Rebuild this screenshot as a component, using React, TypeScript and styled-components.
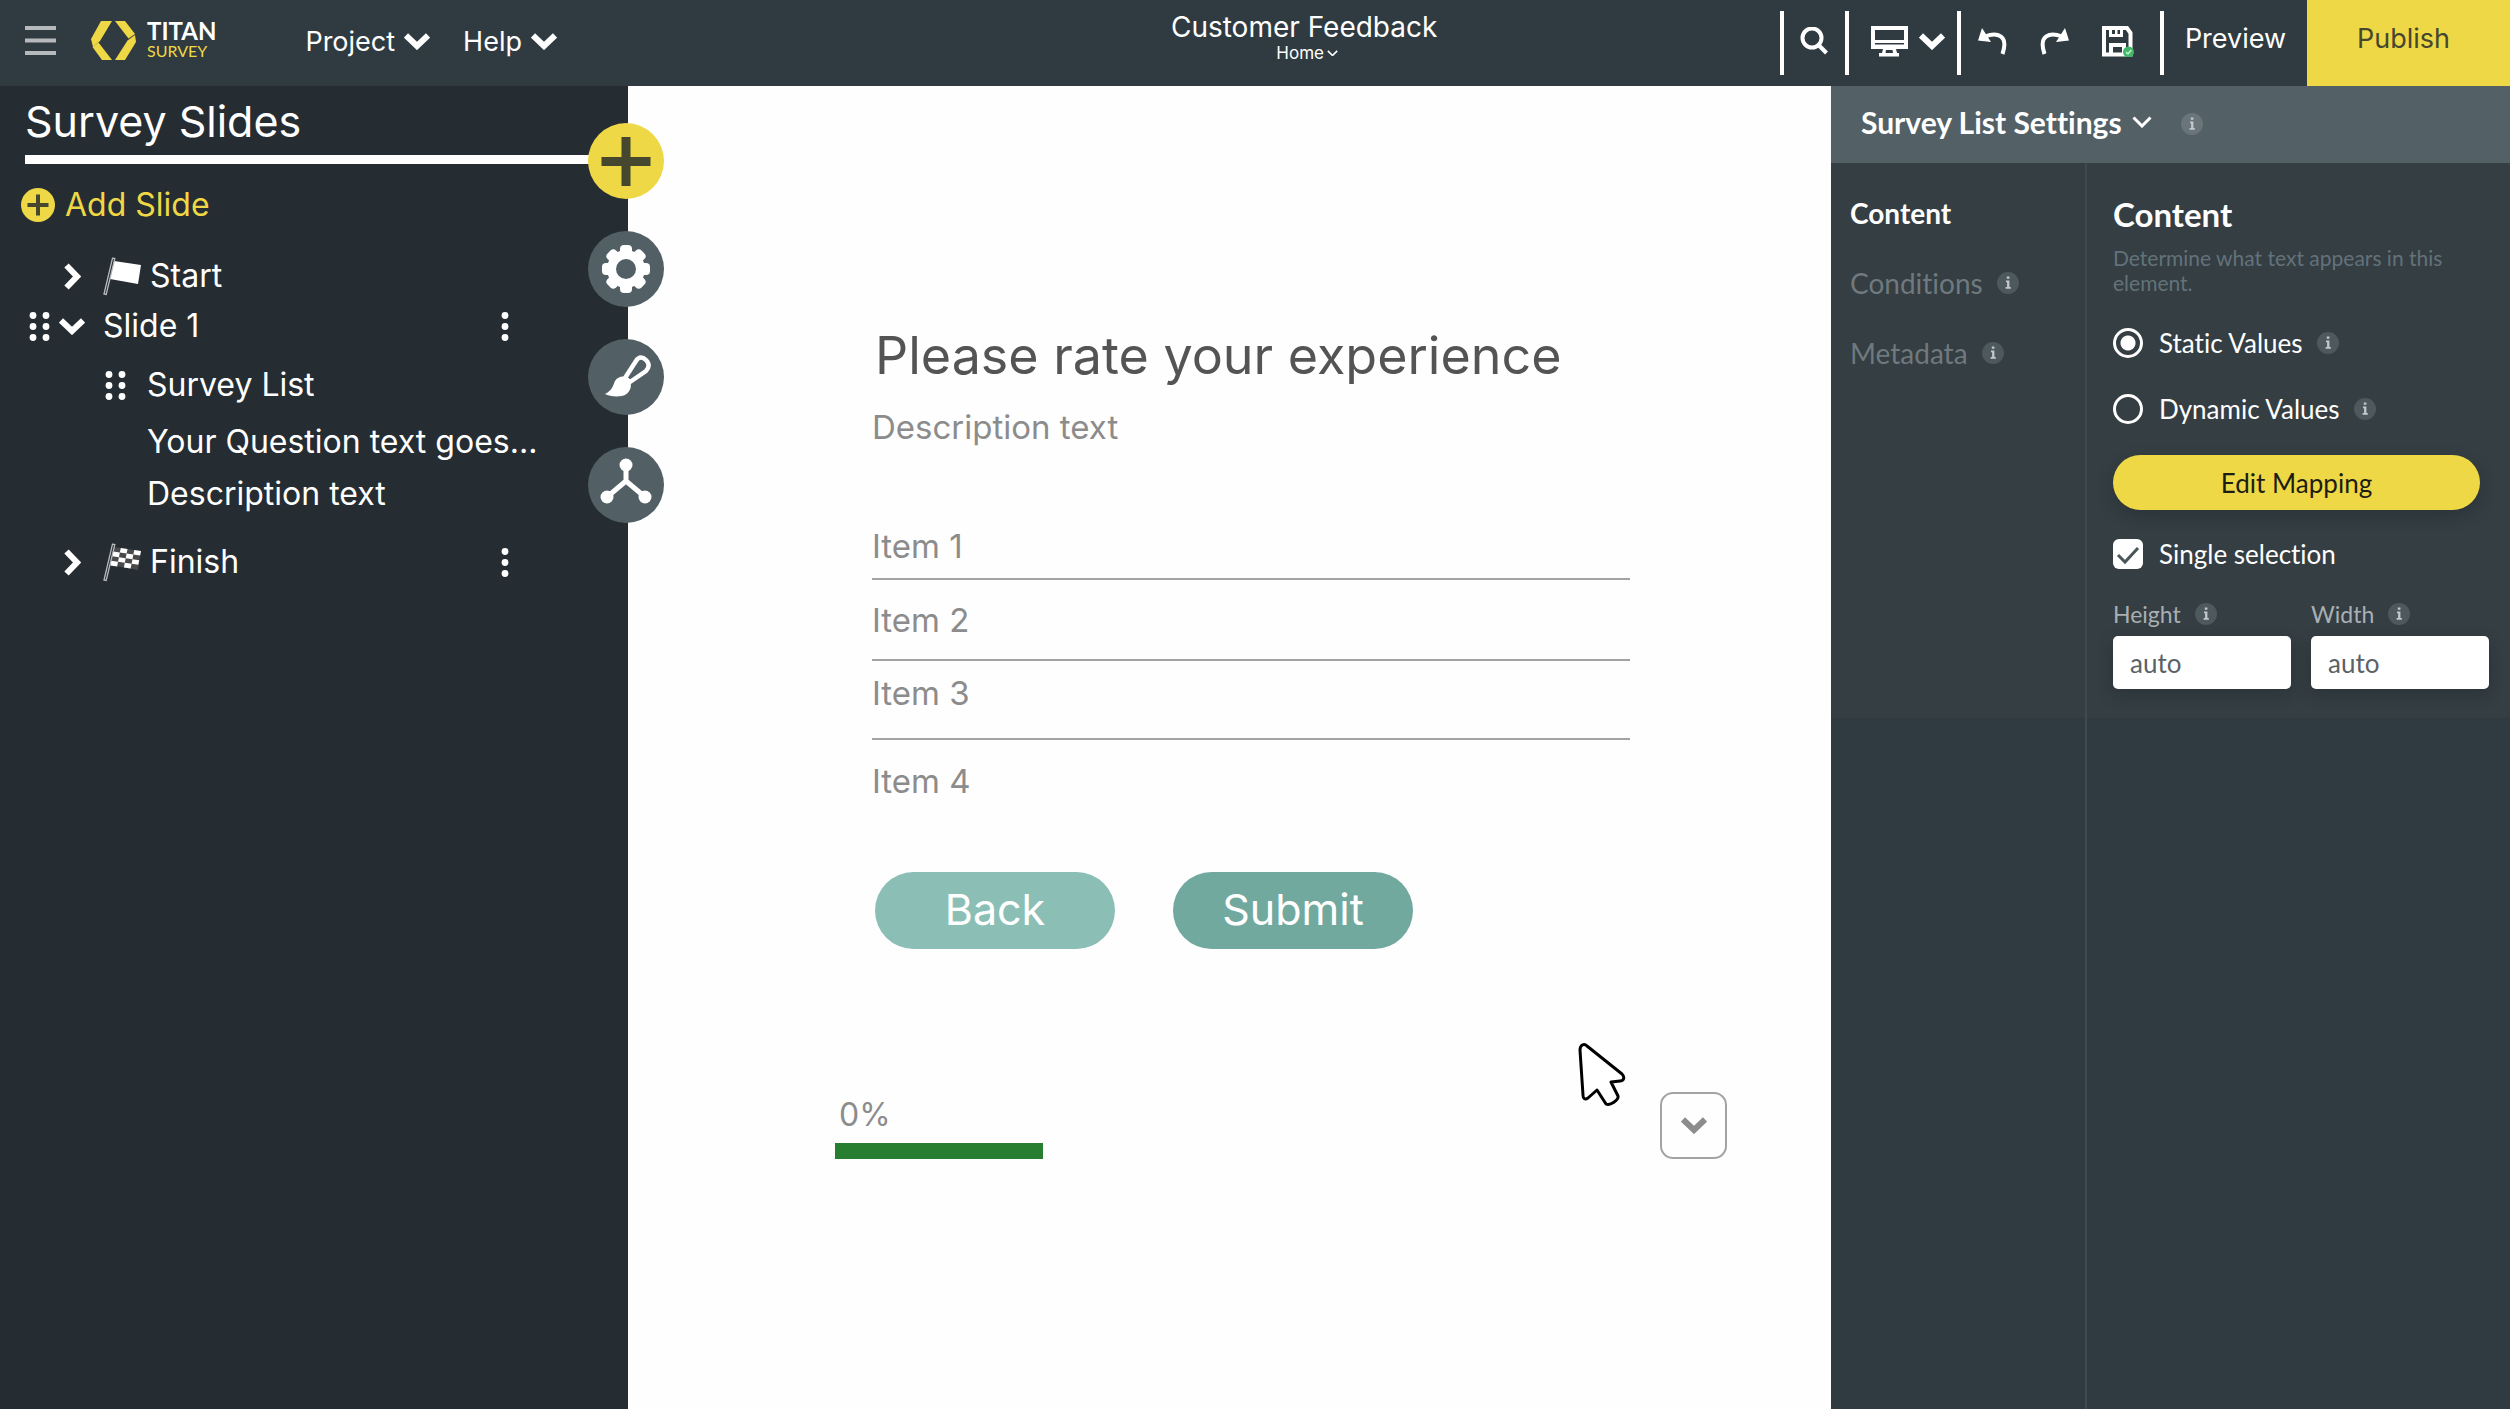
import React from "react";
import styled, { createGlobalStyle } from "styled-components";

const ui = `Inter, "Noto Sans", sans-serif`;
const lato = `Lato, "Open Sans", sans-serif`;

const color = {
  bar: "#303b41",
  sidebar: "#252d33",
  yellow: "#eed845",
  olive: "#45472f",
  slate: "#525f65",
  panel: "#343e43",
  white: "#ffffff",
  grey: "#8c8c8c",
};

const GlobalStyle = createGlobalStyle`
  *, *::before, *::after { box-sizing: border-box; }
  body { margin: 0; background: ${color.bar}; font-family: ${ui}; }
  button { font: inherit; color: inherit; background: none; border: 0; padding: 0; cursor: pointer; }
  h1, h2, h3, p, ul { margin: 0; padding: 0; font-weight: 400; }
  ul { list-style: none; }
  svg { display: block; flex: none; }
`;

const Page = styled.div`
  display: flex;
  flex-direction: column;
  min-height: 100vh;
`;

/* ---------- top bar ---------- */

const TopBar = styled.header`
  display: flex;
  height: 86px;
  background: ${color.bar};
  color: ${color.white};
`;

const BrandArea = styled.div`
  flex: 0 0 33%;
  display: flex;
  align-items: center;
  padding: 0 0 6px 25px;
`;

const BrandLink = styled.a`
  display: flex;
  align-items: center;
  gap: 11px;
  margin: 0 89px 0 35px;
  color: inherit;
  text-decoration: none;
`;

const Wordmark = styled.span`
  display: flex;
  flex-direction: column;
  font-family: ${lato};
`;

const WordmarkMain = styled.span`
  font-size: 24px;
  line-height: 22px;
  font-weight: 700;
`;

const WordmarkSub = styled.span`
  font-size: 16px;
  line-height: 18px;
  color: ${color.yellow};
`;

const Menus = styled.nav`
  display: flex;
  gap: 33px;
  padding-top: 3px;
`;

const MenuButton = styled.button`
  display: flex;
  align-items: center;
  gap: 9px;
  font-size: 27px;
  line-height: 32px;
`;

const TitleArea = styled.div`
  flex: 1;
  display: flex;
  flex-direction: column;
  align-items: center;
  padding-top: 11px;
`;

const ProjectTitle = styled.h1`
  font-size: 28px;
  line-height: 32px;
  white-space: nowrap;
`;

const PageSwitch = styled.button`
  display: flex;
  align-items: center;
  gap: 3px;
  padding-left: 6px;
  font-size: 17px;
  line-height: 20px;
`;

const Tools = styled.div`
  display: flex;
  align-items: center;
`;

const Divider = styled.span`
  width: 4px;
  height: 64px;
  background: ${color.white};
`;

const ToolGroup = styled.div<{ $width: number; $gap: number; $left: number }>`
  display: flex;
  align-items: center;
  gap: ${(p) => p.$gap}px;
  width: ${(p) => p.$width}px;
  padding: 0 0 4px ${(p) => p.$left}px;
`;

const IconButton = styled.button`
  display: flex;
  align-items: center;
  justify-content: center;
  gap: 11px;
`;

const PreviewButton = styled.button`
  width: 143px;
  height: 86px;
  padding-bottom: 10px;
  font-size: 27px;
`;

const PublishButton = styled(PreviewButton)`
  width: 203px;
  padding-right: 10px;
  background: ${color.yellow};
  color: ${color.olive};
`;

/* ---------- workspace ---------- */

const Workspace = styled.div`
  flex: 1;
  display: grid;
  grid-template-columns: 628px minmax(0, 1fr) 679px;
`;

const Sidebar = styled.aside`
  position: relative;
  padding-top: 10px;
  background: ${color.sidebar};
  color: ${color.white};
`;

const SidebarTitle = styled.h2`
  padding-left: 25px;
  font-size: 43px;
  line-height: 50px;
`;

const SidebarRule = styled.div`
  height: 9px;
  margin: 9px 0 0 25px;
  background: ${color.white};
`;

const AddSlide = styled.button`
  display: flex;
  align-items: center;
  gap: 10px;
  margin: 24px 0 29px 21px;
  font-size: 32px;
  line-height: 34px;
  color: ${color.yellow};
`;

const Tree = styled.ul`
  font-size: 32px;
  line-height: 50px;
`;

const TreeRow = styled.div<{ $indent: number; $gap?: number }>`
  display: flex;
  align-items: center;
  gap: ${(p) => p.$gap ?? 9}px;
  height: 50px;
  padding: 0 119px 0 ${(p) => p.$indent}px;
  white-space: nowrap;
`;

const Branch = styled.ul`
  padding: 9px 0 18px;
`;

const Leaves = styled.ul`
  display: flex;
  flex-direction: column;
  gap: 2px;
  padding-top: 7px;
`;

const Toggle = styled.button`
  display: flex;
  justify-content: center;
  width: 26px;
  margin-right: 9px;
`;

const MoreButton = styled.button`
  margin-left: auto;
`;

const Rail = styled.nav`
  position: absolute;
  z-index: 1;
  top: 37px;
  right: -36px;
  display: flex;
  flex-direction: column;
  gap: 32px;
`;

const RailButton = styled.button<{ $active?: boolean }>`
  width: 76px;
  height: 76px;
  border-radius: 50%;
  background: ${(p) => (p.$active ? color.yellow : color.slate)};
  color: ${(p) => (p.$active ? color.olive : color.white)};
`;

/* ---------- canvas ---------- */

const Canvas = styled.main`
  position: relative;
  padding: 240px 104px 0 207px;
  background: #fefefe;
  color: ${color.grey};
  font-size: 33px;
  line-height: 40px;
`;

const Form = styled.section`
  padding: 0 97px 0 37px;
`;

const Question = styled.h2`
  padding-left: 3px;
  font-size: 52px;
  line-height: 60px;
  color: #545454;
  white-space: nowrap;
`;

const Description = styled.p`
  margin: 21px 0 79px;
`;

const Choice = styled.li<{ $above: number; $below: number }>`
  padding: ${(p) => p.$above}px 0 ${(p) => p.$below}px;
  border-bottom: 2px solid #a3a3a3;
  &:last-child { border-bottom: 0; }
`;

const Actions = styled.div`
  display: flex;
  gap: 58px;
  margin: 71px 0 143px;
  padding-left: 3px;
`;

const ActionButton = styled.button<{ $strong?: boolean }>`
  width: 240px;
  height: 77px;
  padding-bottom: 4px;
  border-radius: 39px;
  background: ${(p) => (p.$strong ? "#72a99f" : "#8bbfb6")};
  color: ${color.white};
  font-size: 43px;
`;

const CanvasFooter = styled.footer`
  display: flex;
  justify-content: space-between;
  align-items: flex-end;
`;

const ProgressLabel = styled.div`
  padding-left: 4px;
  font-size: 32px;
`;

const ProgressBar = styled.div`
  width: 208px;
  height: 16px;
  margin-top: 8px;
  background: #277e31;
`;

const NextButton = styled.button`
  display: flex;
  align-items: center;
  justify-content: center;
  width: 67px;
  height: 67px;
  border: 2px solid #a3a3a3;
  border-radius: 13px;
`;

const Pointer = styled.svg`
  position: absolute;
  left: 950px;
  top: 957px;
`;

/* ---------- settings panel ---------- */

const Panel = styled.aside`
  display: flex;
  flex-direction: column;
  font-family: ${lato};
  font-variant-ligatures: none;
  color: ${color.white};
`;

const PanelHeader = styled.div`
  display: flex;
  align-items: center;
  gap: 29px;
  height: 77px;
  padding: 0 0 2px 30px;
  background: #536066;
`;

const PanelTitle = styled.button`
  display: flex;
  align-items: center;
  gap: 10px;
  padding-bottom: 3px;
  font-size: 30px;
  font-weight: 700;
`;

const PanelBody = styled.div`
  flex: 1;
  display: grid;
  grid-template-columns: 256px 1fr;
  background: linear-gradient(${color.panel} 555px, ${color.bar} 555px);
`;

const Tabs = styled.nav`
  display: flex;
  flex-direction: column;
  padding: 15px 0 0 19px;
  border-right: 2px solid #3f494e;
`;

const Tab = styled.button<{ $active?: boolean }>`
  display: flex;
  align-items: center;
  gap: 14px;
  height: 70px;
  font-size: 28px;
  font-weight: ${(p) => (p.$active ? 700 : 400)};
  color: ${(p) => (p.$active ? color.white : "#70797d")};
`;

const Fields = styled.section`
  padding: 31px 21px 0 26px;
  font-size: 26px;
`;

const FieldsTitle = styled.h3`
  font-size: 33px;
  line-height: 40px;
  font-weight: 700;
`;

const Hint = styled.p`
  margin: 11px 0 33px;
  font-size: 21px;
  line-height: 25px;
  color: #63727a;
`;

const OptionRow = styled.div<{ $after: number }>`
  display: flex;
  align-items: center;
  gap: 14px;
  height: 30px;
  margin-bottom: ${(p) => p.$after}px;
`;

const OptionLabel = styled.label`
  display: flex;
  align-items: center;
  gap: 16px;
  line-height: 34px;
`;

const Radio = styled.input`
  appearance: none;
  width: 30px;
  height: 30px;
  margin: 0;
  border: 3px solid ${color.white};
  border-radius: 50%;
  &:checked { background: radial-gradient(circle, ${color.white} 7px, transparent 8px); }
`;

const CheckHolder = styled.span`
  display: grid;
  > * { grid-area: 1 / 1; }
`;

const Checkbox = styled.input`
  appearance: none;
  width: 30px;
  height: 30px;
  margin: 0;
  border-radius: 6px;
  background: ${color.white};
  & + svg { visibility: hidden; pointer-events: none; }
  &:checked + svg { visibility: visible; }
`;

const MappingButton = styled.button`
  display: block;
  width: calc(100% - 9px);
  height: 55px;
  margin-bottom: 29px;
  border-radius: 28px;
  background: ${color.yellow};
  box-shadow: 0 6px 18px rgba(0, 0, 0, 0.18);
  color: #1d1d14;
`;

const SizeRow = styled.div`
  display: flex;
  gap: 20px;
`;

const SizeField = styled.div`
  flex: 1;
  min-width: 0;
`;

const SizeHead = styled.div`
  display: flex;
  align-items: center;
  gap: 14px;
  height: 26px;
  margin-bottom: 9px;
  font-size: 23px;
  color: #a9afb2;
`;

const TextBox = styled.input`
  width: 100%;
  height: 53px;
  padding: 0 17px;
  border: 0;
  border-radius: 5px;
  background: ${color.white};
  box-shadow: 0 6px 18px rgba(0, 0, 0, 0.18);
  font-family: ${lato};
  font-size: 26px;
  color: #5a6266;
`;

/* ---------- icons ---------- */

const ChevronDown = ({ tone = "#fff" }: { tone?: string }) => (
  <svg width="26" height="17" viewBox="0 0 26 17" aria-hidden="true">
    <path d="M2 2.5 13 13 24 2.5" fill="none" stroke={tone} strokeWidth="6" />
  </svg>
);

const ChevronRight = () => (
  <svg width="18" height="27" viewBox="0 0 18 27" aria-hidden="true">
    <path d="M3.5 2.5 14 13.5 3.5 24.5" fill="none" stroke="#fff" strokeWidth="6" />
  </svg>
);

const ThinChevron = ({ size }: { size: number }) => (
  <svg width={size} height={size * 0.6} viewBox="0 0 20 12" aria-hidden="true">
    <path d="M1.5 1.5 10 10 18.5 1.5" fill="none" stroke="#fff" strokeWidth="3" />
  </svg>
);

const Grip = () => (
  <svg width="21" height="29" viewBox="0 0 21 29" fill="#fff" aria-hidden="true">
    {[3.5, 14.5, 25.5].map((y) => (
      <g key={y}>
        <circle cx="4" cy={y} r="3.4" />
        <circle cx="17" cy={y} r="3.4" />
      </g>
    ))}
  </svg>
);

const Kebab = () => (
  <svg width="8" height="29" viewBox="0 0 8 29" fill="#fff" aria-hidden="true">
    <circle cx="4" cy="3.5" r="3.4" />
    <circle cx="4" cy="14.5" r="3.4" />
    <circle cx="4" cy="25.5" r="3.4" />
  </svg>
);

const cells = [0, 1, 2, 3].flatMap((row) =>
  [0, 1, 2, 3].filter((col) => (row + col) % 2 === 1).map((col) => ({ row, col }))
);

const Flag = ({ checkered }: { checkered?: boolean }) => (
  <svg width="38" height="39" viewBox="0 0 38 39" aria-hidden="true">
    <path d="M11 4 38 8 35 27 7 22Z" fill={checkered ? "#4a4a4a" : "#fff"} />
    {checkered && (
      <g transform="matrix(6.75 1 -0.9 4.6 11 4)" fill="#fff">
        {cells.map(({ row, col }) => (
          <rect key={`${row}-${col}`} x={col} y={row} width="1" height="1" />
        ))}
      </g>
    )}
    <path d="M9.5 1.2 11.8 1.6 3.2 37.5 1 37Z" fill="#252d33" stroke="#b9bcbe" strokeWidth="1.3" />
  </svg>
);

const Info = ({ disc = "#4e595e" }: { disc?: string }) => (
  <svg width="22" height="22" viewBox="0 0 22 22" role="img" aria-label="Information">
    <circle cx="11" cy="11" r="11" fill={disc} />
    <path d="M9.8 4.5h2.600v2.300H9.800zM9 8.500h3.400v6.500h1.400v1.800H8.600v-1.800h1.500v-4.700H9z" fill="#c3c9cb" />
  </svg>
);

const Logo = () => (
  <svg width="45" height="41" viewBox="0 0 45 41" fill={color.yellow} aria-hidden="true">
    <path d="M10 1H21L9 21 2 27 0 19Z" />
    <path d="M1.5 27 7.5 22.5 21 40H11Z" />
    <path d="M24 1H34L44 14 37.5 18.5Z" />
    <path d="M36.5 20.5 44 15 45 22 34 40H24Z" />
  </svg>
);

const Hamburger = () => (
  <svg width="31" height="29" viewBox="0 0 31 29" fill="#b7babc" aria-hidden="true">
    <rect y="0" width="31" height="4" />
    <rect y="12.5" width="31" height="4" />
    <rect y="25" width="31" height="4" />
  </svg>
);

const SearchIcon = () => (
  <svg width="29" height="29" viewBox="0 0 29 29" fill="none" stroke="#fff" strokeWidth="4" aria-hidden="true">
    <circle cx="12" cy="11" r="9.5" />
    <path d="M18.5 18 26.5 26" />
  </svg>
);

const MonitorIcon = () => (
  <svg width="37" height="31" viewBox="0 0 37 31" fill="#fff" aria-hidden="true">
    <path fillRule="evenodd" d="M0 0h37v23H0zM4 4v10h29V4zM4 17v1.600h29V17z" />
    <path fillRule="evenodd" d="M12 23h13l1 4h2v3.500H8V27h3zM15 24l-.5 3h7.500l-.5-3z" />
  </svg>
);

const UndoIcon = ({ flip }: { flip?: boolean }) => (
  <svg width="29" height="27" viewBox="0 0 29 27" aria-hidden="true">
    <g transform={flip ? "matrix(-1 0 0 1 29 0)" : undefined}>
      <path d="M4 0 13 14 0 12.5Z" fill="#fff" />
      <path d="M7 8.5C19 4 31 7 24.5 26" fill="none" stroke="#fff" strokeWidth="4" />
    </g>
  </svg>
);

const SaveIcon = () => (
  <svg width="32" height="31" viewBox="0 0 32 31" aria-hidden="true">
    <path d="M2 2H25L28.5 7V28.5H2Z" fill="none" stroke="#fff" strokeWidth="4" />
    <path d="M7 3h3v5h3V3h2.500v5H18V3h3v8H7zM7 28V17h17v11h-4v-7h-9v7z" fill="#fff" />
    <circle cx="26.5" cy="26" r="5.5" fill="#3fb868" />
    <path d="M24 26l2 2 3.300-4" fill="none" stroke="#c9f2d4" strokeWidth="1.5" />
  </svg>
);

const AddIcon = () => (
  <svg width="34" height="34" viewBox="0 0 34 34" aria-hidden="true">
    <circle cx="17" cy="17" r="17" fill={color.yellow} />
    <path d="M6.5 17h21M17 6.5v21" stroke={color.olive} strokeWidth="4" />
  </svg>
);

const RailSvg = ({ children }: { children: React.ReactNode }) => (
  <svg width="76" height="76" viewBox="0 0 76 76" aria-hidden="true">
    {children}
  </svg>
);

const PlusGlyph = () => (
  <RailSvg>
    <path d="M13.5 38.5h49M38 14v49" stroke="currentColor" strokeWidth="9" />
  </RailSvg>
);

const GearGlyph = () => (
  <RailSvg>
    {[0, 45, 90, 135].map((angle) => (
      <rect
        key={angle}
        x="32"
        y="14"
        width="12"
        height="48"
        rx="4"
        fill="currentColor"
        transform={`rotate(${angle} 38 38)`}
      />
    ))}
    <circle cx="38" cy="38" r="19" fill="currentColor" />
    <circle cx="38" cy="38" r="10" fill={color.slate} />
  </RailSvg>
);

const BrushGlyph = () => (
  <RailSvg>
    <path
      d="M17 55C25 51 25 46 27 42 30 37 37 36 41 40 45 45 43 55 34 57 27 58 21 57 17 55Z"
      fill="currentColor"
    />
    <path
      d="M37 39 48 22C51 17 55 18 58 21 62 25 61 29 58 32L42 43Z"
      fill="none"
      stroke="currentColor"
      strokeWidth="4.5"
      strokeLinejoin="round"
    />
  </RailSvg>
);

const NetworkGlyph = () => (
  <RailSvg>
    <path d="M38 18V34L19 50M38 34 57 50" fill="none" stroke="currentColor" strokeWidth="5" />
    <circle cx="38" cy="18" r="6.5" fill="currentColor" />
    <circle cx="19" cy="50" r="6.5" fill="currentColor" />
    <circle cx="57" cy="50" r="6.5" fill="currentColor" />
  </RailSvg>
);

/* ---------- data ---------- */

const choices = [
  { text: "Item 1", above: 0, below: 12 },
  { text: "Item 2", above: 20, below: 19 },
  { text: "Item 3", above: 12, below: 25 },
  { text: "Item 4", above: 21, below: 0 },
];

const rail = [
  { label: "Add element", glyph: <PlusGlyph />, active: true },
  { label: "Settings", glyph: <GearGlyph /> },
  { label: "Design", glyph: <BrushGlyph /> },
  { label: "Flow", glyph: <NetworkGlyph /> },
];

export default function App() {
  return (
    <Page>
      <GlobalStyle />
      <TopBar>
        <BrandArea>
          <IconButton aria-label="Menu">
            <Hamburger />
          </IconButton>
          <BrandLink href="#">
            <Logo />
            <Wordmark>
              <WordmarkMain>TITAN</WordmarkMain>
              <WordmarkSub>SURVEY</WordmarkSub>
            </Wordmark>
          </BrandLink>
          <Menus>
            <MenuButton>
              Project <ChevronDown />
            </MenuButton>
            <MenuButton>
              Help <ChevronDown />
            </MenuButton>
          </Menus>
        </BrandArea>
        <TitleArea>
          <ProjectTitle>Customer Feedback</ProjectTitle>
          <PageSwitch>
            Home <ThinChevron size={11} />
          </PageSwitch>
        </TitleArea>
        <Tools>
          <Divider />
          <ToolGroup $width={61} $gap={0} $left={16}>
            <IconButton aria-label="Search">
              <SearchIcon />
            </IconButton>
          </ToolGroup>
          <Divider />
          <ToolGroup $width={108} $gap={0} $left={22}>
            <IconButton aria-label="Device">
              <MonitorIcon />
              <ChevronDown />
            </IconButton>
          </ToolGroup>
          <Divider />
          <ToolGroup $width={199} $gap={33} $left={17}>
            <IconButton aria-label="Undo">
              <UndoIcon />
            </IconButton>
            <IconButton aria-label="Redo">
              <UndoIcon flip />
            </IconButton>
            <IconButton aria-label="Save">
              <SaveIcon />
            </IconButton>
          </ToolGroup>
          <Divider />
          <PreviewButton>Preview</PreviewButton>
          <PublishButton>Publish</PublishButton>
        </Tools>
      </TopBar>

      <Workspace>
        <Sidebar>
          <SidebarTitle>Survey Slides</SidebarTitle>
          <SidebarRule />
          <AddSlide>
            <AddIcon /> Add Slide
          </AddSlide>
          <Tree>
            <li>
              <TreeRow $indent={59}>
                <Toggle aria-label="Expand Start">
                  <ChevronRight />
                </Toggle>
                <Flag />
                <span>Start</span>
              </TreeRow>
            </li>
            <li>
              <TreeRow $indent={29}>
                <Grip />
                <Toggle aria-label="Collapse Slide 1">
                  <ChevronDown />
                </Toggle>
                <span>Slide 1</span>
                <MoreButton aria-label="Slide 1 options">
                  <Kebab />
                </MoreButton>
              </TreeRow>
              <Branch>
                <li>
                  <TreeRow $indent={105} $gap={21}>
                    <Grip />
                    <span>Survey List</span>
                  </TreeRow>
                  <Leaves>
                    <li>
                      <TreeRow $indent={147}>Your Question text goes...</TreeRow>
                    </li>
                    <li>
                      <TreeRow $indent={147}>Description text</TreeRow>
                    </li>
                  </Leaves>
                </li>
              </Branch>
            </li>
            <li>
              <TreeRow $indent={59}>
                <Toggle aria-label="Expand Finish">
                  <ChevronRight />
                </Toggle>
                <Flag checkered />
                <span>Finish</span>
                <MoreButton aria-label="Finish options">
                  <Kebab />
                </MoreButton>
              </TreeRow>
            </li>
          </Tree>
          <Rail aria-label="Tools">
            {rail.map((item) => (
              <RailButton key={item.label} $active={item.active} aria-label={item.label}>
                {item.glyph}
              </RailButton>
            ))}
          </Rail>
        </Sidebar>

        <Canvas>
          <Form>
            <Question>Please rate your experience</Question>
            <Description>Description text</Description>
            <ul>
              {choices.map((choice) => (
                <Choice key={choice.text} $above={choice.above} $below={choice.below}>
                  {choice.text}
                </Choice>
              ))}
            </ul>
            <Actions>
              <ActionButton>Back</ActionButton>
              <ActionButton $strong>Submit</ActionButton>
            </Actions>
          </Form>
          <CanvasFooter>
            <div>
              <ProgressLabel>0%</ProgressLabel>
              <ProgressBar />
            </div>
            <NextButton aria-label="Next">
              <ChevronDown tone="#8c8c8c" />
            </NextButton>
          </CanvasFooter>
          <Pointer width="48" height="64" viewBox="0 0 48 64" aria-hidden="true">
            <path
              d="M2 7C2 2 6 0 9 3L44 31C47 34 46 38 42 38L33 39 40 53C41 57 32 63 28 61L19 47 10 55C7 57 5 56 5 52Z"
              fill="#fff"
              stroke="#000"
              strokeWidth="3"
              strokeLinejoin="round"
            />
          </Pointer>
        </Canvas>

        <Panel>
          <PanelHeader>
            <PanelTitle>
              Survey List Settings <ThinChevron size={20} />
            </PanelTitle>
            <Info disc="#69757b" />
          </PanelHeader>
          <PanelBody>
            <Tabs>
              <Tab $active>Content</Tab>
              <Tab>
                Conditions <Info />
              </Tab>
              <Tab>
                Metadata <Info />
              </Tab>
            </Tabs>
            <Fields>
              <FieldsTitle>Content</FieldsTitle>
              <Hint>Determine what text appears in this element.</Hint>
              <OptionRow $after={36}>
                <OptionLabel>
                  <Radio type="radio" name="values" defaultChecked />
                  Static Values
                </OptionLabel>
                <Info />
              </OptionRow>
              <OptionRow $after={31}>
                <OptionLabel>
                  <Radio type="radio" name="values" />
                  Dynamic Values
                </OptionLabel>
                <Info />
              </OptionRow>
              <MappingButton>Edit Mapping</MappingButton>
              <OptionRow $after={32}>
                <OptionLabel>
                  <CheckHolder>
                    <Checkbox type="checkbox" defaultChecked />
                    <svg width="30" height="30" viewBox="0 0 30 30" aria-hidden="true">
                      <path d="M5 16 12 23 25 9" fill="none" stroke="#4b555a" strokeWidth="3" />
                    </svg>
                  </CheckHolder>
                  Single selection
                </OptionLabel>
              </OptionRow>
              <SizeRow>
                <SizeField>
                  <SizeHead>
                    <label htmlFor="height">Height</label>
                    <Info />
                  </SizeHead>
                  <TextBox id="height" defaultValue="auto" />
                </SizeField>
                <SizeField>
                  <SizeHead>
                    <label htmlFor="width">Width</label>
                    <Info />
                  </SizeHead>
                  <TextBox id="width" defaultValue="auto" />
                </SizeField>
              </SizeRow>
            </Fields>
          </PanelBody>
        </Panel>
      </Workspace>
    </Page>
  );
}
